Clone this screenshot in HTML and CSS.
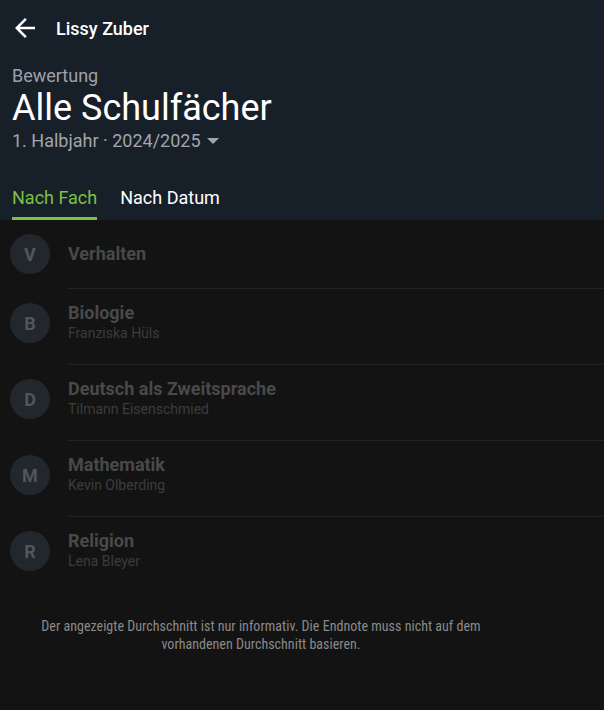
FILE: index.html
```html
<!DOCTYPE html>
<html lang="de">
<head>
<meta charset="utf-8">
<title>Bewertung</title>
<link rel="stylesheet" href="styles.css">
</head>
<body>
<header class="header">
  <div class="topbar">
    <span class="back">
      <svg viewBox="0 0 24 24" width="30" height="30"><path fill="#fff" d="M20 11H7.83l5.59-5.59L12 4l-8 8 8 8 1.41-1.41L7.83 13H20v-2z"/></svg>
    </span>
    <span class="topbar-title">Lissy Zuber</span>
  </div>
  <div class="heading">
    <div class="overline">Bewertung</div>
    <h1 class="title">Alle Schulfächer</h1>
    <div class="period">1. Halbjahr · 2024/2025 <span class="caret"></span></div>
  </div>
  <nav class="tabs">
    <span class="tab active">Nach Fach</span>
    <span class="tab">Nach Datum</span>
  </nav>
</header>
<main class="content">
  <div class="list">
    <div class="row">
      <div class="avatar">V</div>
      <div class="text"><div class="name">Verhalten</div></div>
    </div>
    <div class="divider"></div>
    <div class="row">
      <div class="avatar">B</div>
      <div class="text two"><div class="name">Biologie</div><div class="teacher">Franziska Hüls</div></div>
    </div>
    <div class="divider"></div>
    <div class="row">
      <div class="avatar">D</div>
      <div class="text two"><div class="name">Deutsch als Zweitsprache</div><div class="teacher">Tilmann Eisenschmied</div></div>
    </div>
    <div class="divider"></div>
    <div class="row">
      <div class="avatar">M</div>
      <div class="text two"><div class="name">Mathematik</div><div class="teacher">Kevin Olberding</div></div>
    </div>
    <div class="divider"></div>
    <div class="row">
      <div class="avatar">R</div>
      <div class="text two"><div class="name">Religion</div><div class="teacher">Lena Bleyer</div></div>
    </div>
  </div>
  <p class="note">Der angezeigte Durchschnitt ist nur informativ. Die Endnote muss nicht auf dem vorhandenen Durchschnitt basieren.</p>
</main>
</body>
</html>
```
FILE: styles.css
```css
* { box-sizing: border-box; }
html, body {
  margin: 0;
  padding: 0;
  background: #131313;
  font-family: Roboto, "Noto Sans", sans-serif;
  height: 100%;
}
body { overflow: hidden; }

.header {
  background: #171f29;
  padding: 0 12px;
}
.topbar {
  height: 56px;
  display: flex;
  align-items: center;
}
.back {
  width: 30px;
  height: 30px;
  margin-left: -2px;
  display: flex;
}
.topbar-title {
  margin-left: 16px;
  color: #fff;
  font-size: 18px;
  font-weight: 500;
}
.heading {
  padding-top: 9px;
}
.overline {
  color: #9ea2a7;
  font-size: 18px;
  line-height: 22px;
}
.title {
  margin: 0;
  color: #fff;
  font-size: 36px;
  line-height: 42px;
  font-weight: 400;
}
.period {
  color: #a2a5a9;
  font-size: 18px;
  line-height: 24px;
  display: flex;
  align-items: center;
}
.caret {
  margin-left: 6px;
  width: 0;
  height: 0;
  border-left: 6px solid transparent;
  border-right: 6px solid transparent;
  border-top: 6px solid #a2a5a9;
}
.tabs {
  margin-top: 19px;
  display: flex;
  gap: 23px;
}
.tab {
  color: #fff;
  font-size: 18px;
  line-height: 24px;
  padding: 14px 0 7px;
  border-bottom: 3px solid transparent;
}
.tab.active {
  color: #7bc143;
  border-bottom-color: #7bc143;
}

.row {
  display: flex;
  align-items: center;
  padding: 14px 0 14px 10px;
  gap: 18px;
}
.row:has(.two) { align-items: flex-start; }
.avatar {
  width: 40px;
  height: 40px;
  border-radius: 50%;
  background: #21272d;
  color: #52565b;
  font-weight: 700;
  font-size: 18px;
  display: flex;
  align-items: center;
  justify-content: center;
  flex: none;
}
.text.two { padding-bottom: 7px; }
.name {
  color: #494949;
  font-weight: 700;
  font-size: 18px;
  line-height: 20px;
}
.teacher {
  color: #3c3c3c;
  font-size: 14px;
  line-height: 20px;
}
.divider {
  height: 1px;
  margin-left: 68px;
  background: #222;
}
.note {
  margin: 25px 94px 0 12px;
  text-align: center;
  color: #8a8a8a;
  font-size: 14px;
  font-stretch: 87.5%;
  letter-spacing: 0.02px;
  line-height: 18px;
}
```
